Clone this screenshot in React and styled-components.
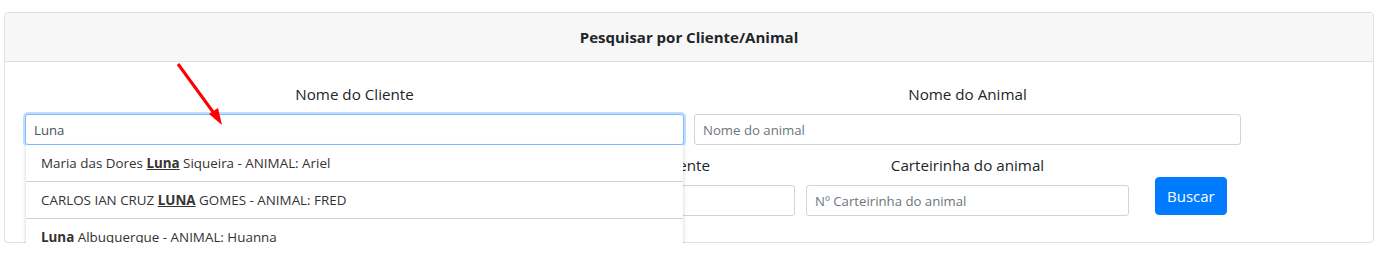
import React from "react";
import styled, { createGlobalStyle } from "styled-components";

const Global = createGlobalStyle`
  html, body { margin: 0; padding: 0; background: #fff; }
  body {
    font-family: "Open Sans", "Noto Sans", sans-serif;
    color: #212529;
  }
  * { box-sizing: border-box; }
`;

const Page = styled.div`
  position: relative;
  padding: 12px 26px 0 4px;
`;

const Card = styled.div`
  border: 1px solid #dfdfdf;
  border-radius: 4px;
  background: #fff;
`;

const CardHeader = styled.div`
  background: #f7f7f7;
  border-bottom: 1px solid #dfdfdf;
  padding: 12px 20px;
  text-align: center;
  font-weight: 700;
  font-size: 15px;
  line-height: 24px;
  border-radius: 3px 3px 0 0;
`;

const CardBody = styled.div`
  padding: 20px 20px 26px 20px;
  display: flex;
  flex-direction: column;
  gap: 8px;
`;

const Row = styled.div`
  display: flex;
  align-items: flex-end;
  gap: ${(p) => p.$gap || 10}px;
  padding-left: ${(p) => p.$indent || 0}px;
`;

const Field = styled.div`
  position: relative;
  width: ${(p) => p.$w}px;
  display: flex;
  flex-direction: column;
  gap: 8px;
`;

const Label = styled.label`
  text-align: center;
  font-size: 15.2px;
  line-height: 24px;
  color: #212529;
`;

const Input = styled.input`
  height: 31px;
  width: 100%;
  padding: 4px 8px;
  font-family: inherit;
  font-size: 13.2px;
  color: #495057;
  border: 1px solid ${(p) => (p.$focus ? "#80bdff" : "#ced4da")};
  border-radius: 3px;
  outline: none;
  box-shadow: ${(p) => (p.$focus ? "0 0 0 2px rgba(0,123,255,.25)" : "none")};
  &::placeholder { color: #6c757d; }
`;

const Button = styled.button`
  height: 38px;
  padding: 6px 11px;
  margin-left: 15px;
  margin-bottom: 1px;
  font-family: inherit;
  font-size: 15px;
  color: #fff;
  background: #007bff;
  border: 1px solid #007bff;
  border-radius: 4px;
`;

const Dropdown = styled.ul`
  position: absolute;
  left: 1px;
  right: 1px;
  top: 100%;
  margin: 0;
  padding: 0;
  list-style: none;
  background: #fff;
  z-index: 10;
  box-shadow: 0 2px 4px rgba(0,0,0,.2);
`;

const Item = styled.li`
  box-sizing: content-box;
  height: 36px;
  padding: 0 15px;
  display: flex;
  align-items: center;
  font-size: 13.4px;
  color: #333;
  border-top: ${(p) => (p.$first ? "none" : "1px solid #d0d0d0")};
  white-space: pre;
`;

const Match = styled.strong`
  font-weight: 700;
  text-decoration: underline;
`;

const Arrow = styled.svg`
  position: absolute;
  left: 170px;
  top: 58px;
  pointer-events: none;
  z-index: 20;
`;

const items = [
  ["Maria das Dores ", "Luna", " Siqueira - ANIMAL: Ariel"],
  ["CARLOS IAN CRUZ ", "LUNA", " GOMES - ANIMAL: FRED"],
  ["", "Luna", " Albuquerque - ANIMAL: Huanna"],
];

export default function App() {
  return (
    <Page>
      <Global />
      <Card>
        <CardHeader>Pesquisar por Cliente/Animal</CardHeader>
        <CardBody>
          <Row $gap={10}>
            <Field $w={659}>
              <Label>Nome do Cliente</Label>
              <Input $focus defaultValue="Luna" />
              <Dropdown>
                {items.map((it, i) => (
                  <Item key={i} $first={i === 0}>
                    {it[0]}
                    <Match>{it[1]}</Match>
                    {it[2]}
                  </Item>
                ))}
              </Dropdown>
            </Field>
            <Field $w={547}>
              <Label>Nome do Animal</Label>
              <Input placeholder="Nome do animal" />
            </Field>
          </Row>
          <Row $gap={11} $indent={448}>
            <Field $w={322}>
              <Label>Carteirinha do cliente</Label>
              <Input placeholder="Nº Carteirinha do cliente" />
            </Field>
            <Field $w={323}>
              <Label>Carteirinha do animal</Label>
              <Input placeholder="Nº Carteirinha do animal" />
            </Field>
            <Button>Buscar</Button>
          </Row>
        </CardBody>
      </Card>
      <Arrow width="70" height="75" viewBox="0 0 70 75">
        <line x1="8" y1="6" x2="46" y2="58" stroke="#ff0000" strokeWidth="3" />
        <polygon points="52,67 39,56 48,50" fill="#ff0000" />
      </Arrow>
    </Page>
  );
}
